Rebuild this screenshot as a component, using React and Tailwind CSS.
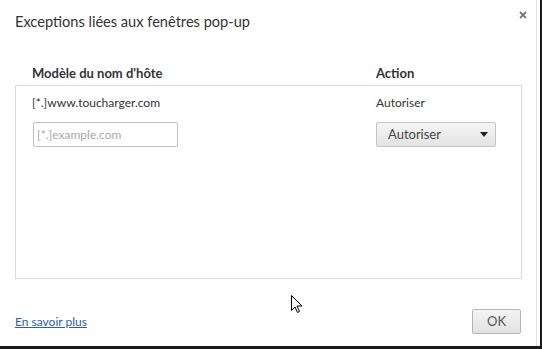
import React from 'react';

function Cursor() {
  return (
    <svg width="12" height="19" viewBox="0 0 12 19" className="absolute left-[291px] top-[295px]">
      <path d="M0.5 0.5 L0.5 15.5 L4 12 L6.5 17.5 L8.5 16.5 L6 11 L11 11 Z" fill="#fff" stroke="#000" strokeWidth="1" strokeLinejoin="miter" />
    </svg>
  );
}

export default function App() {
  return (
    <div className="relative w-[542px] h-[349px] bg-white overflow-hidden" style={{ fontFamily: 'Lato, "Open Sans", sans-serif' }}>
      <div className="flex h-[346px]">
        <div className="relative w-[536px] h-full flex flex-col">
          <div className="flex justify-between pl-[15px] pr-[9px] pt-[10px]">
            <h1 className="text-[14.6px] text-[#333] leading-[24px]">Exceptions liées aux fenêtres pop-up</h1>
            <svg width="8" height="8" viewBox="0 0 8 8" className="mt-[1px]">
              <path d="M1 1 L7 7 M7 1 L1 7" stroke="#777" strokeWidth="1.8" />
            </svg>
          </div>

          <div className="flex pl-[32px] pt-[31px] pb-[4px] text-[13px] font-bold text-[#333] leading-[16px]">
            <span className="w-[344px]">Modèle du nom d'hôte</span>
            <span>Action</span>
          </div>

          <div className="mx-[15px] w-[507px] h-[194px] border border-[#dadada]">
            <div className="flex pl-[16px] pt-[9px] h-[32px] text-[12px] text-[#333] leading-[16px]">
              <span className="w-[344px]">[*.]www.toucharger.com</span>
              <span>Autoriser</span>
            </div>
            <div className="flex items-center pl-[17px] pt-[4px]">
              <div className="w-[145px] h-[25px] border border-[#bfbfbf] rounded-[2px] flex items-center pl-[3px] text-[12px] text-[#a8a8a8]">
                [*.]example.com
              </div>
              <div className="ml-[198px] w-[120px] h-[25px] border border-[#c4c4c4] rounded-[2px] bg-gradient-to-b from-[#f5f5f5] to-[#e3e3e3] flex items-center justify-between pl-[11px] pr-[7px] text-[13px] text-[#444]">
                <span>Autoriser</span>
                <svg width="8" height="5" viewBox="0 0 8 5"><path d="M0 0 L8 0 L4 5 Z" fill="#222" /></svg>
              </div>
            </div>
          </div>

          <div className="flex justify-between items-center pl-[15px] pr-[15px] mt-[30px]">
            <a href="#" className="text-[12px] text-[#2a5db0] underline leading-[16px]">En savoir plus</a>
            <div className="w-[49px] h-[25px] border border-[#b5b5b5] rounded-[2px] bg-gradient-to-b from-[#f4f4f4] to-[#e2e2e2] flex items-center justify-center text-[13px] text-[#555]">
              OK
            </div>
          </div>
        </div>
        <div className="w-[1px] h-full bg-[#e0e0e0]"></div>
        <div className="w-[3px] h-full bg-white"></div>
        <div className="w-[2px] h-full bg-[#1a1a1a]"></div>
      </div>
      <div className="h-[3px] bg-[#1a1a1a]"></div>
      <Cursor />
    </div>
  );
}
